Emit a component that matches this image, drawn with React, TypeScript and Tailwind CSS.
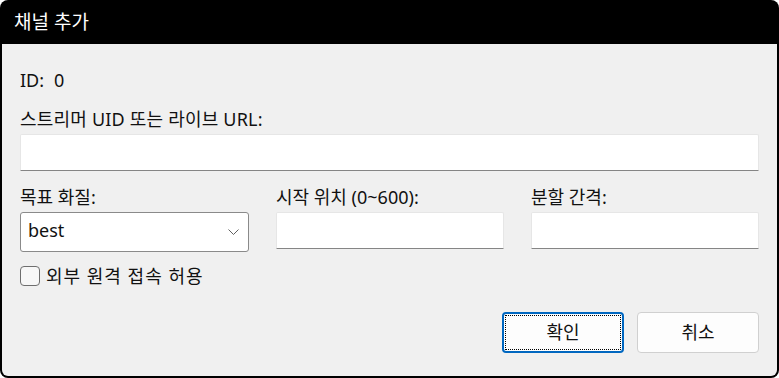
import { useState } from "react";

const FONT = "font-['Noto_Sans','Noto_Sans_CJK_KR',sans-serif]";

function TextBox({ className }: { className: string }) {
  return (
    <div
      className={`h-[37px] bg-white border border-[#e6e6e6] border-b-[#858585] rounded-t-[2px] ${className}`}
    />
  );
}

export default function App() {
  const [remote, setRemote] = useState(false);

  return (
    <div className={`w-[779px] h-[378px] bg-black rounded-[8px] flex flex-col px-[2px] pb-[2px] ${FONT} text-[18px] text-[#111111]`}>
      {/* Title bar */}
      <div className="h-[44px] flex items-center pl-[12px] text-white text-[19px]">채널 추가</div>

      {/* Body */}
      <div className="flex-1 bg-[#f0f0f0] rounded-b-[6px] px-[18px] pt-[26px] flex flex-col">
        <div className="h-[20px] leading-[20px] flex">
          <span>ID:</span>
          <span className="ml-[10px]">0</span>
        </div>

        <div className="mt-[19px] h-[20px] leading-[20px] tracking-[0.2px]">스트리머 UID 또는 라이브 URL:</div>
        <TextBox className="mt-[5px] w-full" />

        <div className="mt-[16px] grid grid-cols-[229px_228px_228px] gap-x-[27px]">
          <div>
            <div className="h-[20px] leading-[20px]">목표 화질:</div>
            <div className="mt-[5px] h-[40px] bg-white border border-[#8a8a8a] rounded-[3px] flex items-center justify-between pl-[7px] pr-[9px] pb-[3px]">
              <span>best</span>
              <svg width="11" height="6" viewBox="0 0 11 6" fill="none" className="mt-[3px]">
                <path d="M0.5 0.5 L5.5 5.5 L10.5 0.5" stroke="#606060" strokeWidth="1" />
              </svg>
            </div>
          </div>
          <div>
            <div className="h-[20px] leading-[20px]">시작 위치 (0~600):</div>
            <TextBox className="mt-[5px]" />
          </div>
          <div>
            <div className="h-[20px] leading-[20px]">분할 간격:</div>
            <TextBox className="mt-[5px]" />
          </div>
        </div>

        <label className="mt-[14px] flex items-center gap-[6px] h-[20px] w-fit cursor-pointer">
          <input
            type="checkbox"
            checked={remote}
            onChange={(e) => setRemote(e.target.checked)}
            className="appearance-none w-[20px] h-[20px] rounded-[4px] border border-[#6e6e6e] bg-[#f7f7f7]"
          />
          <span className="leading-[20px] tracking-[1px]">외부 원격 접속 허용</span>
        </label>

        <div className="mt-[26px] flex justify-end gap-[13px]">
          <button className="w-[122px] h-[41px] rounded-[4px] border-2 border-[#0067c0] bg-[#fdfdfd] p-[1px] flex">
            <span className="flex-1 border border-dotted border-black flex items-center justify-center">확인</span>
          </button>
          <button className="w-[122px] h-[41px] rounded-[4px] border border-[#d0d0d0] bg-[#fdfdfd] flex items-center justify-center">
            취소
          </button>
        </div>
      </div>
    </div>
  );
}
